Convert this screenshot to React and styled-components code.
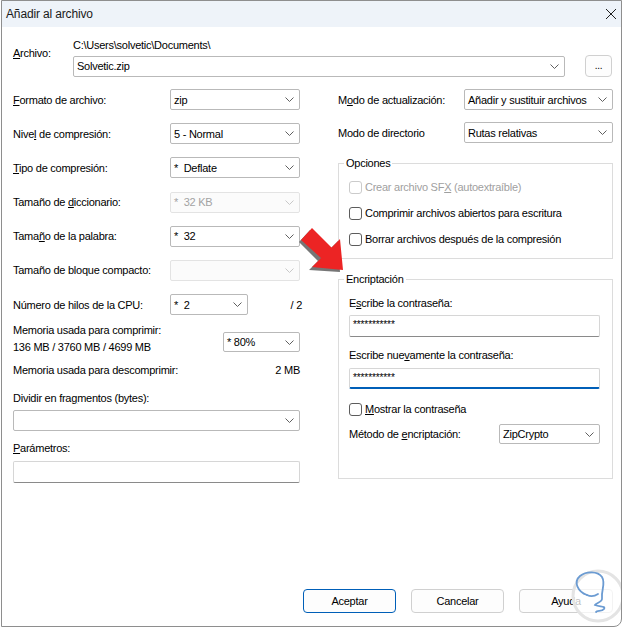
import React from 'react';
import styled, { createGlobalStyle } from 'styled-components';

const Global = createGlobalStyle`
  html, body { margin: 0; padding: 0; background: #ffffff; }
  body {
    font-family: "Liberation Sans", Arial, sans-serif;
    font-size: 11px;
    letter-spacing: -0.25px;
    color: #000;
  }
  * { box-sizing: border-box; }
  fieldset { min-width: 0; }
`;

const Window = styled.div`
  position: relative;
  margin-left: 1px;
  width: 621px;
  height: 627px;
  border: 1px solid #8e8e8e;
  border-radius: 0 0 8px 0;
  background: #fff;
  display: flex;
  flex-direction: column;
  overflow: hidden;
`;

const TitleBar = styled.div`
  height: 26px;
  flex: none;
  background: #eef3f9;
  display: flex;
  align-items: center;
  justify-content: space-between;
  padding: 0 4px 0 4px;
`;

const TitleText = styled.span`
  font-size: 12px;
  letter-spacing: -0.15px;
  color: #1a1a1a;
`;

const Body = styled.div`
  flex: 1;
  padding: 11px 7px 0 11px;
  display: flex;
  flex-direction: column;
`;

const FileSection = styled.div`
  display: flex;
`;

const FileLabel = styled.div`
  width: 60px;
  flex: none;
  padding-top: 8px;
  line-height: 14px;
`;

const FileCol = styled.div`
  flex: 1;
  display: flex;
  flex-direction: column;
  gap: 3px;
`;

const PathText = styled.div`
  line-height: 14px;
`;

const FileRow = styled.div`
  display: flex;
  align-items: center;
`;

const DotsButton = styled.div`
  width: 27px;
  height: 22px;
  margin: 0 2px 0 20px;
  border: 1px solid #d0d0d0;
  border-radius: 4px;
  background: #fdfdfd;
  display: flex;
  align-items: center;
  justify-content: center;
  padding-bottom: 2px;
  font-size: 10px;
  flex: none;
`;

const Columns = styled.div`
  margin-top: 12px;
  display: grid;
  grid-template-columns: 287px 275px;
  column-gap: 38px;
`;

const Col = styled.div`
  display: flex;
  flex-direction: column;
`;

const Stack = styled.div`
  display: flex;
  flex-direction: column;
  gap: ${p => p.$gap}px;
  margin-top: ${p => p.$mt || 0}px;
`;

const FieldRow = styled.div`
  display: flex;
  align-items: ${p => p.$align || 'center'};
  justify-content: space-between;
  min-height: ${p => p.$minH || 0}px;
  margin-top: ${p => p.$mt || 0}px;
`;

const Label = styled.div`
  line-height: ${p => p.$lh || 16}px;
  color: ${p => (p.$disabled ? '#a0a0a0' : '#000')};
  margin-top: ${p => p.$mt || 0}px;
  white-space: nowrap;
`;

const U = styled.span`
  text-decoration: underline;
  text-underline-offset: 1px;
`;

const SelectBox = styled.div`
  width: ${p => (p.$w ? `${p.$w}px` : '100%')};
  height: ${p => p.$h || 21}px;
  flex: ${p => (p.$grow ? '1' : 'none')};
  margin-top: ${p => p.$mt || 0}px;
  display: flex;
  align-items: center;
  justify-content: space-between;
  padding: 0 5px 0 3px;
  border: 1px solid ${p => (p.$disabled ? '#e3e3e3' : '#b9b9b9')};
  border-radius: 2px;
  background: ${p => (p.$disabled ? '#fbfbfb' : '#fff')};
  color: ${p => (p.$disabled ? '#a3a3a3' : '#000')};
  white-space: nowrap;
  overflow: hidden;
`;

const SelectValue = styled.span`
  line-height: 14px;
  white-space: pre;
`;

const Chevron = ({ disabled }) => (
  <svg width="9" height="5" viewBox="0 0 9 5" style={{ flex: 'none' }}>
    <path d="M0.5 0.5 L4.5 4.5 L8.5 0.5" fill="none" stroke={disabled ? '#c8c8c8' : '#5f5f5f'} strokeWidth="1" />
  </svg>
);

const Select = ({ value, w, h, mt, disabled, grow }) => (
  <SelectBox $w={w} $h={h} $mt={mt} $disabled={disabled} $grow={grow}>
    <SelectValue>{value}</SelectValue>
    <Chevron disabled={disabled} />
  </SelectBox>
);

const TextBox = styled.div`
  width: ${p => (p.$w ? `${p.$w}px` : '100%')};
  height: ${p => p.$h || 22}px;
  flex: none;
  margin-top: ${p => p.$mt || 0}px;
  border: 1px solid #d6d6d6;
  border-bottom: ${p => (p.$focus ? '2px solid #005fb8' : '1px solid #8a8a8a')};
  border-radius: 2px;
  background: #fff;
  padding: 3px 0 0 3px;
  font-size: 10px;
  line-height: 12px;
  letter-spacing: -0.1px;
`;

const HilosGroup = styled.div`
  width: 132px;
  margin-right: -2px;
  display: flex;
  align-items: center;
  justify-content: space-between;
`;

const MemBlock = styled.div`
  line-height: 17px;
`;

const Group = styled.fieldset`
  margin: ${p => p.$mt || 0}px 0 0 0;
  padding: ${p => p.$pt}px 12px ${p => p.$pb}px 10px;
  border: 1px solid #dcdcdc;
  display: flex;
  flex-direction: column;
`;

const Legend = styled.legend`
  margin-left: -5px;
  padding: 0 2px;
  line-height: 14px;
`;

const CheckRow = styled.div`
  display: flex;
  align-items: center;
  gap: 3px;
  height: 16px;
  margin-top: ${p => p.$mt || 0}px;
  color: ${p => (p.$disabled ? '#9f9f9f' : '#000')};
`;

const Box = styled.span`
  width: 13px;
  height: 13px;
  flex: none;
  border: 1px solid ${p => (p.$disabled ? '#cbcbcb' : '#5c5c5c')};
  border-radius: 3px;
  background: #fff;
`;

const Footer = styled.div`
  flex: none;
  display: flex;
  justify-content: flex-end;
  gap: 15px;
  padding: 0 8px 13px 0;
`;

const Button = styled.div`
  width: ${p => p.$w || 93}px;
  height: 24px;
  border: 1px solid ${p => (p.$primary ? '#005fb8' : '#d0d0d0')};
  border-radius: 4px;
  background: #fdfdfd;
  display: flex;
  align-items: center;
  justify-content: center;
`;

const Overlay = styled.svg`
  position: absolute;
  left: ${p => p.$x}px;
  top: ${p => p.$y}px;
  pointer-events: none;
`;

const CloseIcon = () => (
  <svg width="12" height="12" viewBox="0 0 12 12">
    <path d="M1 1 L11 11 M11 1 L1 11" stroke="#1f1f1f" strokeWidth="1" fill="none" />
  </svg>
);

export default function App() {
  return (
    <>
      <Global />
      <Window>
        <TitleBar>
          <TitleText>Añadir al archivo</TitleText>
          <CloseIcon />
        </TitleBar>
        <Body>
          <FileSection>
            <FileLabel><U>A</U>rchivo:</FileLabel>
            <FileCol>
              <PathText>{'C:\\Users\\solvetic\\Documents\\'}</PathText>
              <FileRow>
                <Select value="Solvetic.zip" h={21} grow />
                <DotsButton>...</DotsButton>
              </FileRow>
            </FileCol>
          </FileSection>

          <Columns>
            <Col>
              <Stack $gap={13.2}>
                <FieldRow>
                  <Label><U>F</U>ormato de archivo:</Label>
                  <Select value="zip" w={130} />
                </FieldRow>
                <FieldRow>
                  <Label>Nive<U>l</U> de compresión:</Label>
                  <Select value="5 - Normal" w={130} />
                </FieldRow>
                <FieldRow>
                  <Label><U>T</U>ipo de compresión:</Label>
                  <Select value="*  Deflate" w={130} />
                </FieldRow>
                <FieldRow>
                  <Label>Tamaño de <U>d</U>iccionario:</Label>
                  <Select value="*  32 KB" w={130} disabled />
                </FieldRow>
                <FieldRow>
                  <Label>Tama<U>ñ</U>o de la palabra:</Label>
                  <Select value="*  32" w={130} />
                </FieldRow>
                <FieldRow>
                  <Label>Tamaño de bloque compacto:</Label>
                  <Select value="" w={130} disabled />
                </FieldRow>
                <FieldRow>
                  <Label>Número de hilos de la CPU:</Label>
                  <HilosGroup>
                    <Select value="*  2" w={78} />
                    <span>/ 2</span>
                  </HilosGroup>
                </FieldRow>
              </Stack>

              <FieldRow $align="flex-start" $mt={7}>
                <MemBlock>
                  Memoria usada para comprimir:<br />
                  136 MB / 3760 MB / 4699 MB
                </MemBlock>
                <Select value="* 80%" w={77} h={20} mt={10} />
              </FieldRow>

              <FieldRow $mt={6}>
                <Label>Memoria usada para descomprimir:</Label>
                <span>2 MB</span>
              </FieldRow>

              <Label $mt={12}>Dividir en fra<U>g</U>mentos (bytes):</Label>
              <Select value="" mt={4} />

              <Label $mt={9}><U>P</U>arámetros:</Label>
              <TextBox $mt={5} />
            </Col>

            <Col>
              <Stack $gap={12}>
                <FieldRow>
                  <Label>M<U>o</U>do de actualización:</Label>
                  <Select value="Añadir y sustituir archivos" w={149} />
                </FieldRow>
                <FieldRow>
                  <Label>Modo de directorio</Label>
                  <Select value="Rutas relativas" w={149} />
                </FieldRow>
              </Stack>

              <Group $mt={13} $pt={9} $pb={11}>
                <Legend>Opciones</Legend>
                <CheckRow $disabled>
                  <Box $disabled />
                  <span>Crear archivo SF<U>X</U> (autoextraíble)</span>
                </CheckRow>
                <CheckRow $mt={10}>
                  <Box />
                  <span>Comprimir archivos abiertos para escritura</span>
                </CheckRow>
                <CheckRow $mt={10}>
                  <Box />
                  <span>Borrar archivos después de la compresión</span>
                </CheckRow>
              </Group>

              <Group $mt={13} $pt={9} $pb={34}>
                <Legend>Encriptación</Legend>
                <Label>E<U>s</U>cribe la contraseña:</Label>
                <TextBox $mt={4}>***********</TextBox>
                <Label $mt={10}>Escribe nue<U>v</U>amente la contraseña:</Label>
                <TextBox $mt={5} $h={21} $focus>***********</TextBox>
                <CheckRow $mt={12}>
                  <Box />
                  <span><U>M</U>ostrar la contraseña</span>
                </CheckRow>
                <FieldRow $mt={7}>
                  <Label>Método de <U>e</U>ncriptación:</Label>
                  <Select value="ZipCrypto" w={101} h={20} />
                </FieldRow>
              </Group>
            </Col>
          </Columns>
        </Body>

        <Footer>
          <Button $primary>Aceptar</Button>
          <Button>Cancelar</Button>
          <Button $w={94}>Ayuda</Button>
        </Footer>

        <Overlay $x={287} $y={213} width="70" height="70" viewBox="0 0 70 70">
          <polygon points="10,28 21,16 40.5,35.5 49,27 51,58 20,56 29,47" fill="#5e5e5e" opacity="0.85" />
          <polygon points="12,26 23,14 42.5,33.5 51,25 54,56 23,53 32,44" fill="#ec2424" />
        </Overlay>

        <Overlay $x={568} $y={567} width="58" height="58" viewBox="0 0 58 58">
          <circle cx="28" cy="28" r="25" fill="rgba(255,255,255,0.75)" stroke="#e4e4e4" strokeWidth="3" />
          <path
            d="M17 27 C8 24, 3 14, 10 8 C16 3, 28 3, 32 9 C36 16, 31 22, 32 30 C33 34, 26 35, 25 37 C30 39, 36 38, 34 41 C32 44, 27 42, 26 44"
            fill="none" stroke="#6b9bd2" strokeWidth="1.8" strokeLinecap="round"
          />
          <path d="M17 27 C21 29, 25 28, 28 26" fill="none" stroke="#6b9bd2" strokeWidth="1.8" strokeLinecap="round" />
        </Overlay>
      </Window>
    </>
  );
}
